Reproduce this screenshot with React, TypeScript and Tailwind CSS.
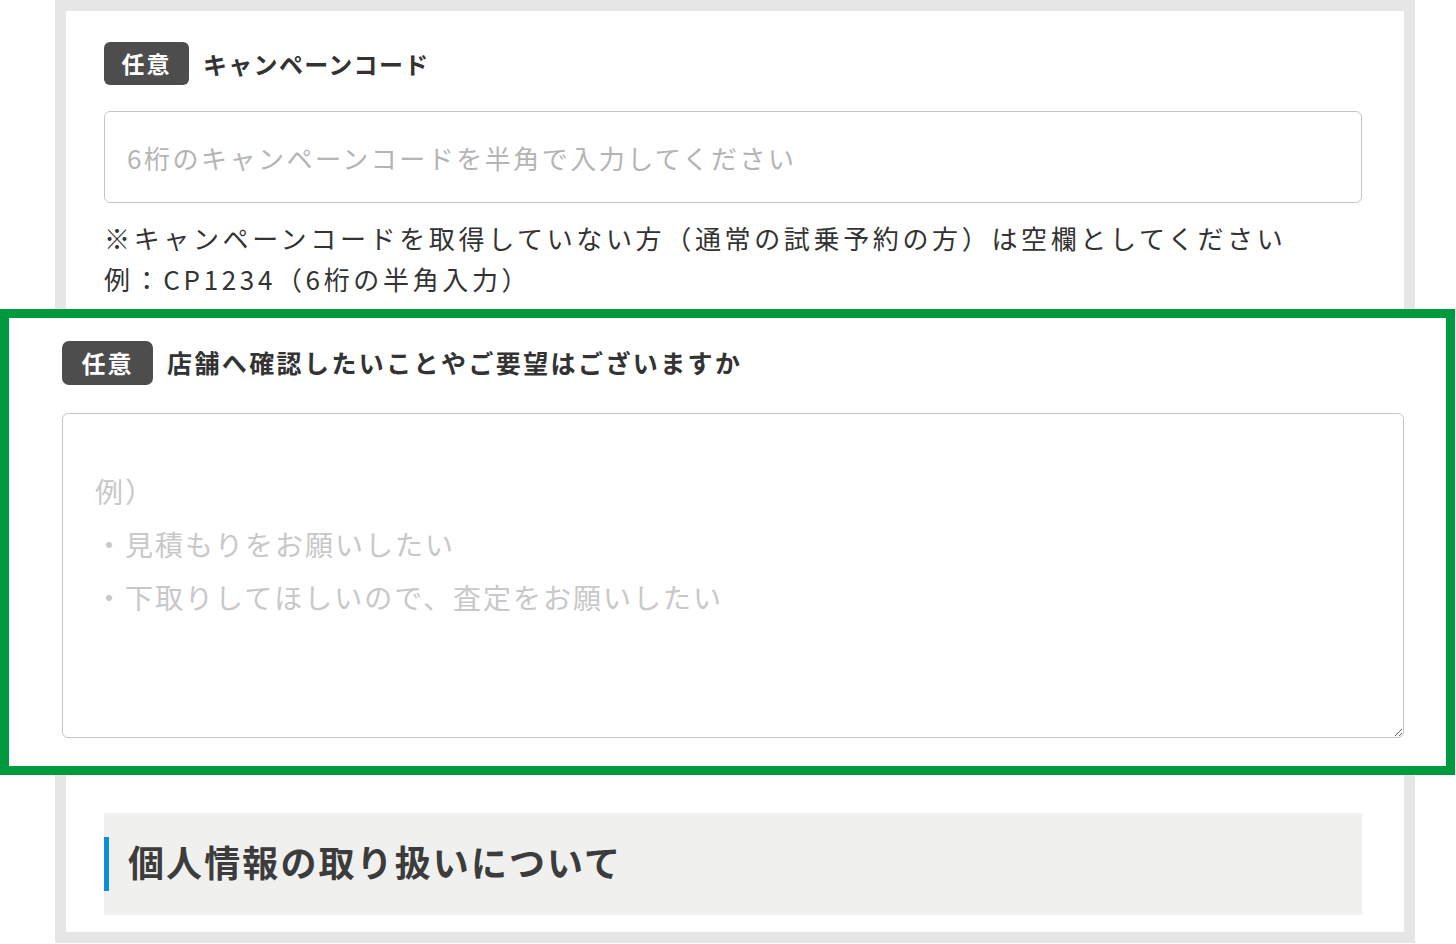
const Badge = ({ big }: { big?: boolean }) => (
  <span
    className={
      big
        ? "flex items-center justify-center w-[91px] h-[44px] rounded-[7px] bg-[#4d4d4d] text-white font-bold text-[24px] tracking-[2px]"
        : "flex items-center justify-center w-[85px] h-[43px] rounded-[6px] bg-[#4d4d4d] text-white font-bold text-[23px] tracking-[2px]"
    }
  >
    任意
  </span>
);

const App = () => {
  return (
    <div className="w-[1456px] h-[944px] overflow-hidden bg-white font-['Noto_Sans_CJK_JP','Noto_Sans',sans-serif] text-[#333]">
      {/* campaign code */}
      <div className="ml-[55px] w-[1360px] h-[309px] border-t-[11px] border-x-[11px] border-[#e6e6e6] pt-[31px] pl-[38px] pr-[42px]">
        <div className="flex items-center gap-[14px]">
          <Badge />
          <span className="text-[24px] font-bold tracking-[1.3px]">キャンペーンコード</span>
        </div>
        <input
          type="text"
          placeholder="6桁のキャンペーンコードを半角で入力してください"
          className="mt-[26px] block w-full h-[92px] rounded-[6px] border-[1.5px] border-[#c6c6c6] px-[22px] text-[26px] tracking-[2.5px] outline-none placeholder:text-[#b4b4b4]"
        />
        <p className="mt-[14px] text-[26px] leading-[41px] tracking-[3.65px] whitespace-nowrap">
          ※キャンペーンコードを取得していない方（通常の試乗予約の方）は空欄としてください
          <br />
          例：CP1234（6桁の半角入力）
        </p>
      </div>

      {/* highlighted request field */}
      <div className="w-[1455px] h-[466px] border-[9px] border-[#009a3e] bg-white pt-[23px] pl-[53px] pr-[42px]">
        <div className="flex items-center gap-[14px]">
          <Badge big />
          <span className="text-[25px] font-bold tracking-[2.4px]">店舗へ確認したいことやご要望はございますか</span>
        </div>
        <textarea
          placeholder={"例）\n・見積もりをお願いしたい\n・下取りしてほしいので、査定をお願いしたい"}
          className="mt-[28px] block w-full h-[325px] rounded-[6px] border-[1.5px] border-[#c6c6c6] pl-[32px] pt-[51px] text-[28px] leading-[53px] tracking-[2px] outline-none resize-y placeholder:text-[#c8c8c8]"
        />
      </div>

      {/* privacy heading */}
      <div className="ml-[55px] w-[1360px] h-[168px] border-b-[11px] border-x-[11px] border-[#e6e6e6] pt-[38px] pl-[38px] pr-[42px]">
        <div className="flex items-center h-[102px] bg-[#f0f0ef]">
          <span className="w-[5px] h-[54px] bg-[#0d8fd8]" />
          <h2 className="ml-[19px] -mt-[6px] text-[36px] font-bold tracking-[2.1px] text-[#3c3c3c]">個人情報の取り扱いについて</h2>
        </div>
      </div>
    </div>
  );
};

export default App;
